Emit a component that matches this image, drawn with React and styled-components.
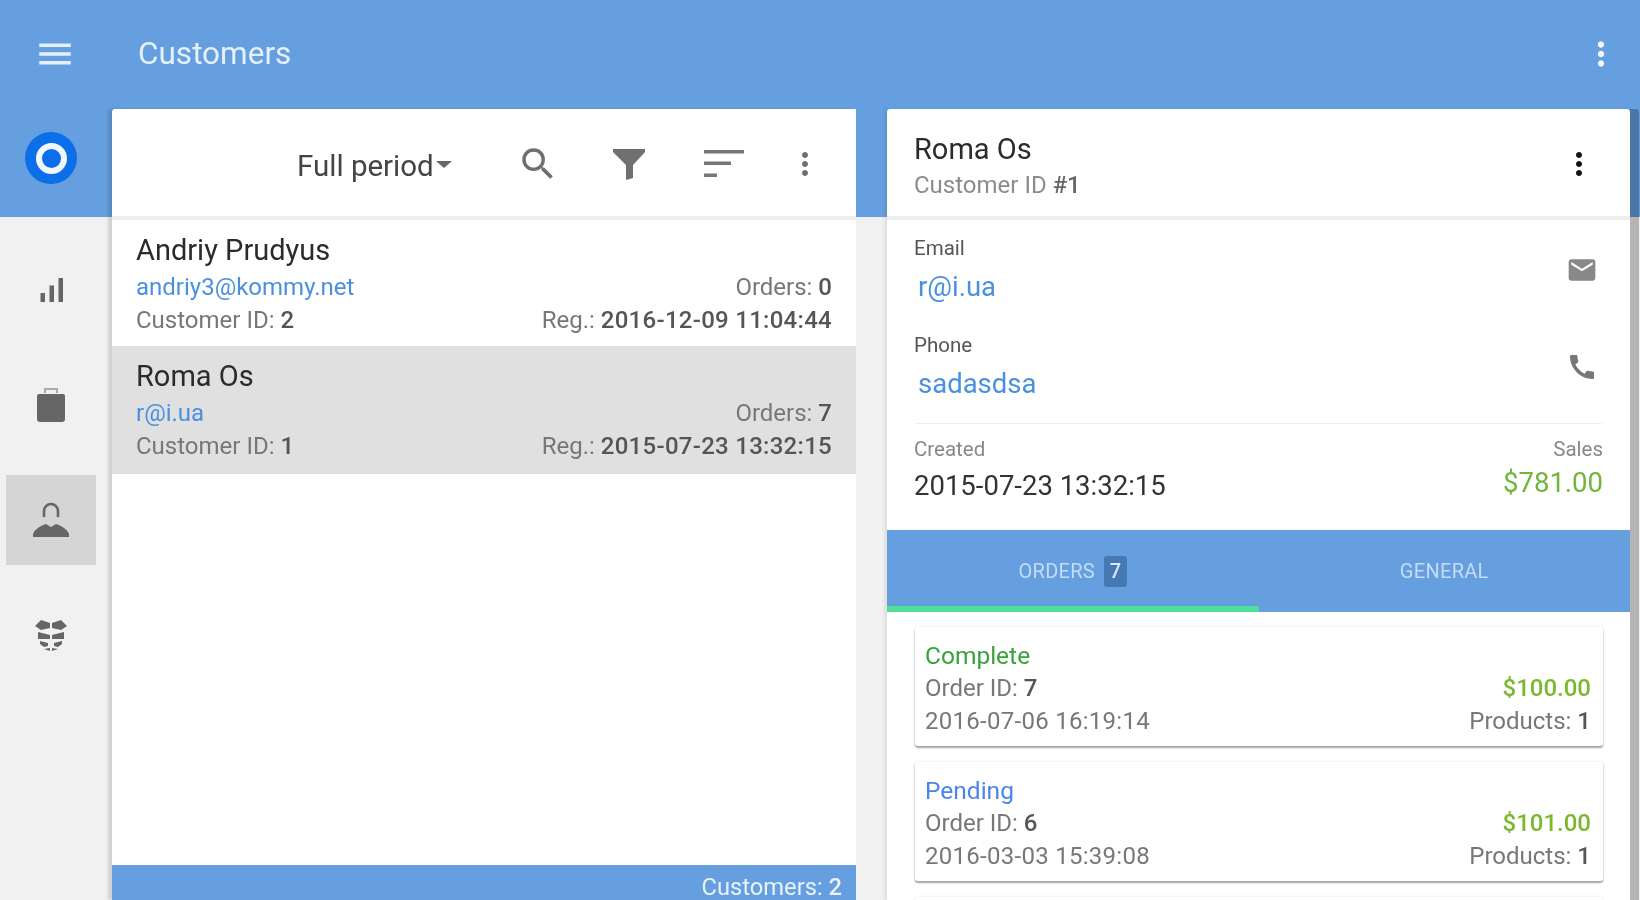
import React from 'react'
import styled, { createGlobalStyle } from 'styled-components'
import { MdMenu, MdMoreVert, MdSearch, MdEmail, MdCall, MdSignalCellularAlt } from 'react-icons/md'

const blue = '#659fdf'
const link = '#4a90e2'

const Global = createGlobalStyle`
html, body { margin: 0; padding: 0; height: 100%; overflow: hidden; }
body { font-family: Roboto, "Liberation Sans", sans-serif; color: #222; }
* { box-sizing: border-box; }
`
const Page = styled.div`
width: 100vw;
height: 100vh;
overflow: hidden;
background: linear-gradient(${blue} 217px, #f1f1f1 217px);
filter: blur(0.7px);
`
const TopBar = styled.header`
display: flex;
align-items: center;
height: 109px;
padding-bottom: 2px;
color: white;
`
const MenuSlot = styled.div`
display: flex;
justify-content: center;
width: 110px;
`
const Title = styled.h1`
flex: 1;
margin: 0 0 0 28px;
font-size: 31.5px;
font-weight: 400;
color: #e6f0fb;
`
const TopMore = styled.div`
display: flex;
width: 60px;
margin-right: 9px;
justify-content: center;
`
const Main = styled.div`
display: flex;
height: 791px;
`
const Sidebar = styled.nav`
display: flex;
flex-direction: column;
align-items: center;
width: 112px;
padding: 0 10px 0 0;
`
const Logo = styled.div`
display: flex;
align-items: center;
justify-content: center;
width: 52px;
height: 52px;
margin: 23px 0 0 0;
border-radius: 50%;
background: #0a6fe8;
`
const LogoRing = styled.div`
width: 31px;
height: 31px;
border: 6px solid #f2f7fd;
border-radius: 50%;
`
const NavList = styled.div`
display: flex;
flex-direction: column;
gap: 25px;
margin-top: 61px;
`
const NavItem = styled.div`
display: flex;
align-items: center;
justify-content: center;
width: 90px;
height: 90px;
background: ${(p) => (p.$active ? '#d5d5d5' : 'transparent')};
color: #666;
`
const ListPanel = styled.section`
display: flex;
flex-direction: column;
width: 744px;
background: white;
border-radius: 3px 0 0 0;
box-shadow: -4px 0 3px rgba(0, 0, 0, 0.13);
`
const Toolbar = styled.div`
display: flex;
flex-shrink: 0;
align-items: center;
height: 111px;
padding: 3px 0 0 185px;
border-bottom: 4px solid #eeeeee;
color: #6f6f6f;
`
const Period = styled.div`
display: flex;
align-items: center;
width: 189px;
padding-top: 3px;
font-size: 29.5px;
color: #444;
`
const Caret = styled.span`
width: 0;
height: 0;
margin: 0 0 2px 2px;
border-left: 8px solid transparent;
border-right: 8px solid transparent;
border-top: 7px solid #666;
`
const ToolSlot = styled.div`
display: flex;
align-items: center;
justify-content: center;
width: ${(p) => p.$w}px;
`
const Rows = styled.div`
flex: 1;
`
const Row = styled.div`
display: flex;
flex-direction: column;
height: ${(p) => p.$h}px;
padding: 12px 24px 0 24px;
background: ${(p) => (p.$selected ? '#e0e0e0' : 'white')};
`
const Name = styled.div`
margin-bottom: 3px;
font-size: 29px;
line-height: 36px;
color: #2b2b2b;
`
const Line = styled.div`
display: flex;
justify-content: space-between;
font-size: 24px;
line-height: 33px;
color: #777;
b { font-weight: 500; color: #555; }
`
const Mail = styled.span`
color: ${link};
`
const Stamp = styled.span`
letter-spacing: 0.28px;
`
const Footer = styled.div`
flex-shrink: 0;
height: 35px;
padding: 7px 14px 0 0;
background: ${blue};
color: #eaf2fb;
font-size: 23.7px;
line-height: 30px;
text-align: right;
b { font-weight: 500; }
`
const DetailPanel = styled.section`
display: flex;
flex-direction: column;
width: 743px;
margin-left: 31px;
background: white;
border-radius: 3px 3px 0 0;
box-shadow: 9px 0 0 rgba(0, 0, 0, 0.25), -3px 0 3px rgba(0, 0, 0, 0.07);
`
const DetailHead = styled.div`
display: flex;
flex-shrink: 0;
align-items: center;
justify-content: space-between;
height: 111px;
padding: 8px 33px 0 27px;
border-bottom: 4px solid #eeeeee;
`
const HeadName = styled.div`
font-size: 29px;
line-height: 36px;
color: #2b2b2b;
`
const HeadSub = styled.div`
font-size: 24px;
line-height: 36px;
color: #8c8c8c;
b { font-weight: 500; color: #666; }
`
const HeadMore = styled.div`
display: flex;
margin-bottom: 6px;
`
const Contacts = styled.div`
flex-shrink: 0;
padding: 1px 28px 0 27px;
`
const Contact = styled.div`
display: flex;
align-items: center;
justify-content: space-between;
height: 97px;
`
const ContactIcon = styled.div`
display: flex;
margin-right: 4px;
`
const Label = styled.div`
font-size: 20.5px;
line-height: 26px;
color: #555;
`
const Value = styled.div`
margin: 9px 0 0 4px;
font-size: 27.5px;
line-height: 34px;
color: ${link};
`
const Rule = styled.div`
height: 1px;
margin: 8px 0 0 1px;
background: #eeeeee;
`
const Stats = styled.div`
display: flex;
flex-shrink: 0;
justify-content: space-between;
height: 106px;
padding: 12px 27px 0 27px;
`
const StatLabel = styled.div`
font-size: 20.5px;
line-height: 26px;
color: #888;
text-align: ${(p) => (p.$right ? 'right' : 'left')};
`
const Created = styled.div`
margin-top: 6px;
font-size: 27.5px;
line-height: 36px;
color: #333;
`
const Sales = styled.div`
margin-top: 3px;
font-size: 27.5px;
line-height: 36px;
color: #72b53b;
`
const Tabs = styled.div`
display: flex;
flex-shrink: 0;
height: 82px;
background: ${blue};
`
const Tab = styled.div`
display: flex;
flex: 1;
align-items: center;
justify-content: center;
gap: 9px;
padding-top: 6px;
border-bottom: 6px solid ${(p) => (p.$active ? '#4ee09a' : 'transparent')};
color: #c5dcf5;
font-size: 20px;
letter-spacing: 0.3px;
`
const Badge = styled.span`
display: flex;
align-items: center;
justify-content: center;
width: 23px;
height: 31px;
border-radius: 3px;
background: #4479b4;
color: #dbe8f6;
font-size: 20px;
font-weight: 500;
`
const Orders = styled.div`
display: flex;
flex-direction: column;
gap: 16px;
padding: 15px 27px 0 28px;
`
const OrderCard = styled.div`
height: 119px;
flex-shrink: 0;
padding: 12px 12px 0 10px;
border-radius: 3px;
background: white;
box-shadow: 0 2px 2px rgba(0, 0, 0, 0.35), 0 0 3px rgba(0, 0, 0, 0.1);
`
const Status = styled.div`
font-size: 24.5px;
line-height: 33px;
color: ${(p) => p.$color};
`
const Money = styled.span`
font-weight: 500;
color: #7cb82f;
`

function BagIcon() {
  return (
    <svg width="32" height="38" viewBox="0 0 32 38" fill="#666">
      <path d="M10 7V3h12v4" fill="none" stroke="#aaa" strokeWidth="2" />
      <path d="M4 8h24a2 2 0 0 1 2 2v23a3 3 0 0 1-3 3H5a3 3 0 0 1-3-3V10a2 2 0 0 1 2-2z" />
    </svg>
  )
}

function PersonIcon() {
  return (
    <svg width="36" height="38" viewBox="0 0 36 38" fill="#666">
      <path d="M11 16V10a7 7 0 0 1 14 0v6" fill="none" stroke="#666" strokeWidth="2.6" />
      <path d="M13 23l5 3 5-3c6 2 11 5 13 10v3H0v-3c2-5 7-8 13-10z" />
    </svg>
  )
}

function BoxIcon() {
  return (
    <svg width="34" height="34" viewBox="0 0 34 34" fill="#666">
      <path d="M7 2l9 3v5l-9 2-6-4zM27 2l-9 3v5l9 2 6-4z" />
      <path d="M4 14l12 3v4l-12 0zM30 14l-12 3v4l12 0z" />
      <path d="M6 23l8 2v3l-4 1-4-3zM28 23l-8 2v3l4 1 4-3z" />
      <path d="M10 31l6-1v3zM24 31l-6-1v3z" />
    </svg>
  )
}

function FunnelIcon() {
  return (
    <svg width="34" height="34" viewBox="0 0 34 34" fill="#707070">
      <path d="M1 2h32v3L21 18v13l-7 2V18L1 5z" />
    </svg>
  )
}

function SortIcon() {
  return (
    <svg width="40" height="28" viewBox="0 0 40 28" fill="#777">
      <rect x="0" y="0" width="40" height="3.5" />
      <rect x="0" y="11.5" width="27" height="3.5" />
      <rect x="0" y="23.5" width="13" height="3.5" />
    </svg>
  )
}

const customers = [
  { name: 'Andriy Prudyus', email: 'andriy3@kommy.net', orders: 0, id: 2, reg: '2016-12-09 11:04:44', h: 126 },
  { name: 'Roma Os', email: 'r@i.ua', orders: 7, id: 1, reg: '2015-07-23 13:32:15', h: 128, selected: true },
]

const orders = [
  { status: 'Complete', color: '#3aa23a', id: 7, date: '2016-07-06 16:19:14', total: '$100.00' },
  { status: 'Pending', color: '#4a85e8', id: 6, date: '2016-03-03 15:39:08', total: '$101.00' },
]

export default function App() {
  return (
    <Page>
      <Global />
      <TopBar>
        <MenuSlot><MdMenu size={42} color="#e6f0fb" /></MenuSlot>
        <Title>Customers</Title>
        <TopMore><MdMoreVert size={38} color="#f4f8fd" /></TopMore>
      </TopBar>
      <Main>
        <Sidebar>
          <Logo><LogoRing /></Logo>
          <NavList>
            <NavItem><MdSignalCellularAlt size={36} /></NavItem>
            <NavItem><BagIcon /></NavItem>
            <NavItem $active><PersonIcon /></NavItem>
            <NavItem><BoxIcon /></NavItem>
          </NavList>
        </Sidebar>
        <ListPanel>
          <Toolbar>
            <Period>Full period<Caret /></Period>
            <ToolSlot $w={104}><MdSearch size={42} /></ToolSlot>
            <ToolSlot $w={78}><FunnelIcon /></ToolSlot>
            <ToolSlot $w={112}><SortIcon /></ToolSlot>
            <ToolSlot $w={50}><MdMoreVert size={36} /></ToolSlot>
          </Toolbar>
          <Rows>
            {customers.map((c) => (
              <Row key={c.id} $h={c.h} $selected={c.selected}>
                <Name>{c.name}</Name>
                <Line>
                  <Mail>{c.email}</Mail>
                  <span>Orders: <b>{c.orders}</b></span>
                </Line>
                <Line>
                  <span>Customer ID: <b>{c.id}</b></span>
                  <span>Reg.: <Stamp as="b">{c.reg}</Stamp></span>
                </Line>
              </Row>
            ))}
          </Rows>
          <Footer>Customers: <b>2</b></Footer>
        </ListPanel>
        <DetailPanel>
          <DetailHead>
            <div>
              <HeadName>Roma Os</HeadName>
              <HeadSub>Customer ID <b>#1</b></HeadSub>
            </div>
            <HeadMore><MdMoreVert size={36} color="#111" /></HeadMore>
          </DetailHead>
          <Contacts>
            <Contact>
              <div>
                <Label>Email</Label>
                <Value>r@i.ua</Value>
              </div>
              <ContactIcon><MdEmail size={32} color="#888" /></ContactIcon>
            </Contact>
            <Contact>
              <div>
                <Label>Phone</Label>
                <Value>sadasdsa</Value>
              </div>
              <ContactIcon><MdCall size={32} color="#777" /></ContactIcon>
            </Contact>
            <Rule />
          </Contacts>
          <Stats>
            <div>
              <StatLabel>Created</StatLabel>
              <Created>2015-07-23 13:32:15</Created>
            </div>
            <div>
              <StatLabel $right>Sales</StatLabel>
              <Sales>$781.00</Sales>
            </div>
          </Stats>
          <Tabs>
            <Tab $active>ORDERS <Badge>7</Badge></Tab>
            <Tab>GENERAL</Tab>
          </Tabs>
          <Orders>
            {orders.map((o) => (
              <OrderCard key={o.id}>
                <Status $color={o.color}>{o.status}</Status>
                <Line>
                  <span>Order ID: <b>{o.id}</b></span>
                  <Money>{o.total}</Money>
                </Line>
                <Line>
                  <Stamp>{o.date}</Stamp>
                  <span>Products: <b>1</b></span>
                </Line>
              </OrderCard>
            ))}
            <OrderCard />
          </Orders>
        </DetailPanel>
      </Main>
    </Page>
  )
}
